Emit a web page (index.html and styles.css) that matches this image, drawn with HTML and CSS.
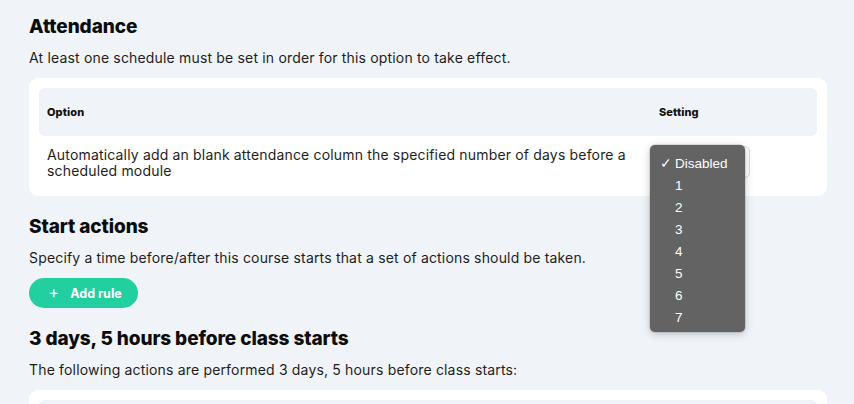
FILE: index.html
```html
<!DOCTYPE html>
<html lang="en">
<head>
<meta charset="utf-8">
<title>Course settings</title>
<link rel="stylesheet" href="styles.css">
</head>
<body>
<main class="page">
  <section class="section">
    <h2 class="title">Attendance</h2>
    <p class="desc">At least one schedule must be set in order for this option to take effect.</p>
    <div class="card">
      <div class="table-head">
        <div class="col-option">Option</div>
        <div class="col-setting">Setting</div>
      </div>
      <div class="table-row">
        <div class="col-option row-text">Automatically add an blank attendance column the specified number of days before a scheduled module</div>
        <div class="col-setting">
          <div class="select-wrap">
            <div class="select">
              <svg class="chev" width="8" height="8" viewBox="0 0 8 8"><path d="M1.5 3 L4 5.5 L6.5 3" fill="none" stroke="#444" stroke-width="1.2"/></svg>
            </div>
            <ul class="menu">
              <li class="menu-item selected"><span class="check">✓</span><span>Disabled</span></li>
              <li class="menu-item"><span class="check"></span><span>1</span></li>
              <li class="menu-item"><span class="check"></span><span>2</span></li>
              <li class="menu-item"><span class="check"></span><span>3</span></li>
              <li class="menu-item"><span class="check"></span><span>4</span></li>
              <li class="menu-item"><span class="check"></span><span>5</span></li>
              <li class="menu-item"><span class="check"></span><span>6</span></li>
              <li class="menu-item"><span class="check"></span><span>7</span></li>
            </ul>
          </div>
        </div>
      </div>
    </div>
  </section>

  <section class="section">
    <h2 class="title">Start actions</h2>
    <p class="desc">Specify a time before/after this course starts that a set of actions should be taken.</p>
    <button class="btn-add"><span class="plus">+</span>Add rule</button>
  </section>

  <section class="section">
    <h2 class="title">3 days, 5 hours before class starts</h2>
    <p class="desc">The following actions are performed 3 days, 5 hours before class starts:</p>
    <div class="card card-cut">
      <div class="table-head"></div>
    </div>
  </section>
</main>
</body>
</html>
```
FILE: styles.css
```css
* { box-sizing: border-box; }
html, body { margin: 0; padding: 0; }
body {
  background: #f0f3f8;
  font-family: Inter, "Open Sans", sans-serif;
  color: #1c1c1c;
  overflow: hidden;
  height: 404px;
}
.page {
  padding: 13px 27px 0 29px;
  display: flex;
  flex-direction: column;
  gap: 17px;
}
.section { display: flex; flex-direction: column; align-items: flex-start; }
.title {
  margin: 0 0 7px;
  font-size: 19px;
  line-height: 28px;
  font-weight: 800;
  letter-spacing: -0.1px;
  color: #0c0c0c;
}
.desc {
  margin: 0 0 10px;
  font-size: 14px;
  line-height: 20px;
  letter-spacing: 0.17px;
  color: #1e1e1e;
}
.card {
  align-self: stretch;
  background: #fff;
  border-radius: 9px;
  padding: 10px;
}
.card-cut { height: 60px; }
.table-head {
  display: flex;
  align-items: center;
  height: 48px;
  background: #f0f3f8;
  border-radius: 6px;
  padding: 0 8px;
  font-size: 11px;
  font-weight: 800;
  letter-spacing: 0.1px;
  color: #111;
}
.col-option { flex: 1; }
.col-setting { width: 150px; flex: none; }
.table-row {
  display: flex;
  align-items: flex-start;
  padding: 10px 8px 7px;
}
.row-text {
  font-size: 14px;
  line-height: 16px;
  letter-spacing: 0.17px;
  padding-top: 1px;
  color: #1e1e1e;
  padding-right: 8px;
}
.select-wrap { position: relative; width: 100px; height: 32px; margin-left: -9px; }
.select {
  width: 100px;
  height: 32px;
  border: 1px solid #d6d9de;
  border-radius: 5px;
  background: #fff;
  display: flex;
  align-items: center;
  justify-content: flex-end;
  padding: 0 3px 0 10px;
}
.menu {
  position: absolute;
  left: 0;
  top: -1px;
  width: 95px;
  margin: 0;
  padding: 8px 0 3px;
  list-style: none;
  background: #636363;
  border-radius: 5px;
  box-shadow: 0 2px 8px rgba(0,0,0,0.22), 0 0 0 0.5px rgba(0,0,0,0.2);
  font-family: "Liberation Sans", Arial, sans-serif;
  font-size: 13.5px;
  color: #fff;
}
.menu-item {
  display: flex;
  height: 22px;
  line-height: 22px;
  padding-left: 10px;
}
.check {
  display: inline-block;
  width: 15px;
  flex: none;
}
.btn-add {
  border: none;
  background: #21cf9f;
  color: #fff;
  height: 30px;
  width: 109px;
  border-radius: 15px;
  font-family: Inter, "Open Sans", sans-serif;
  font-weight: 700;
  font-size: 12.5px;
  display: flex;
  align-items: center;
  padding: 0 0 0 19px;
  cursor: pointer;
}
.plus {
  font-size: 17px;
  font-weight: 400;
  margin-right: 11px;
  line-height: 1;
  margin-top: -2px;
}
```
